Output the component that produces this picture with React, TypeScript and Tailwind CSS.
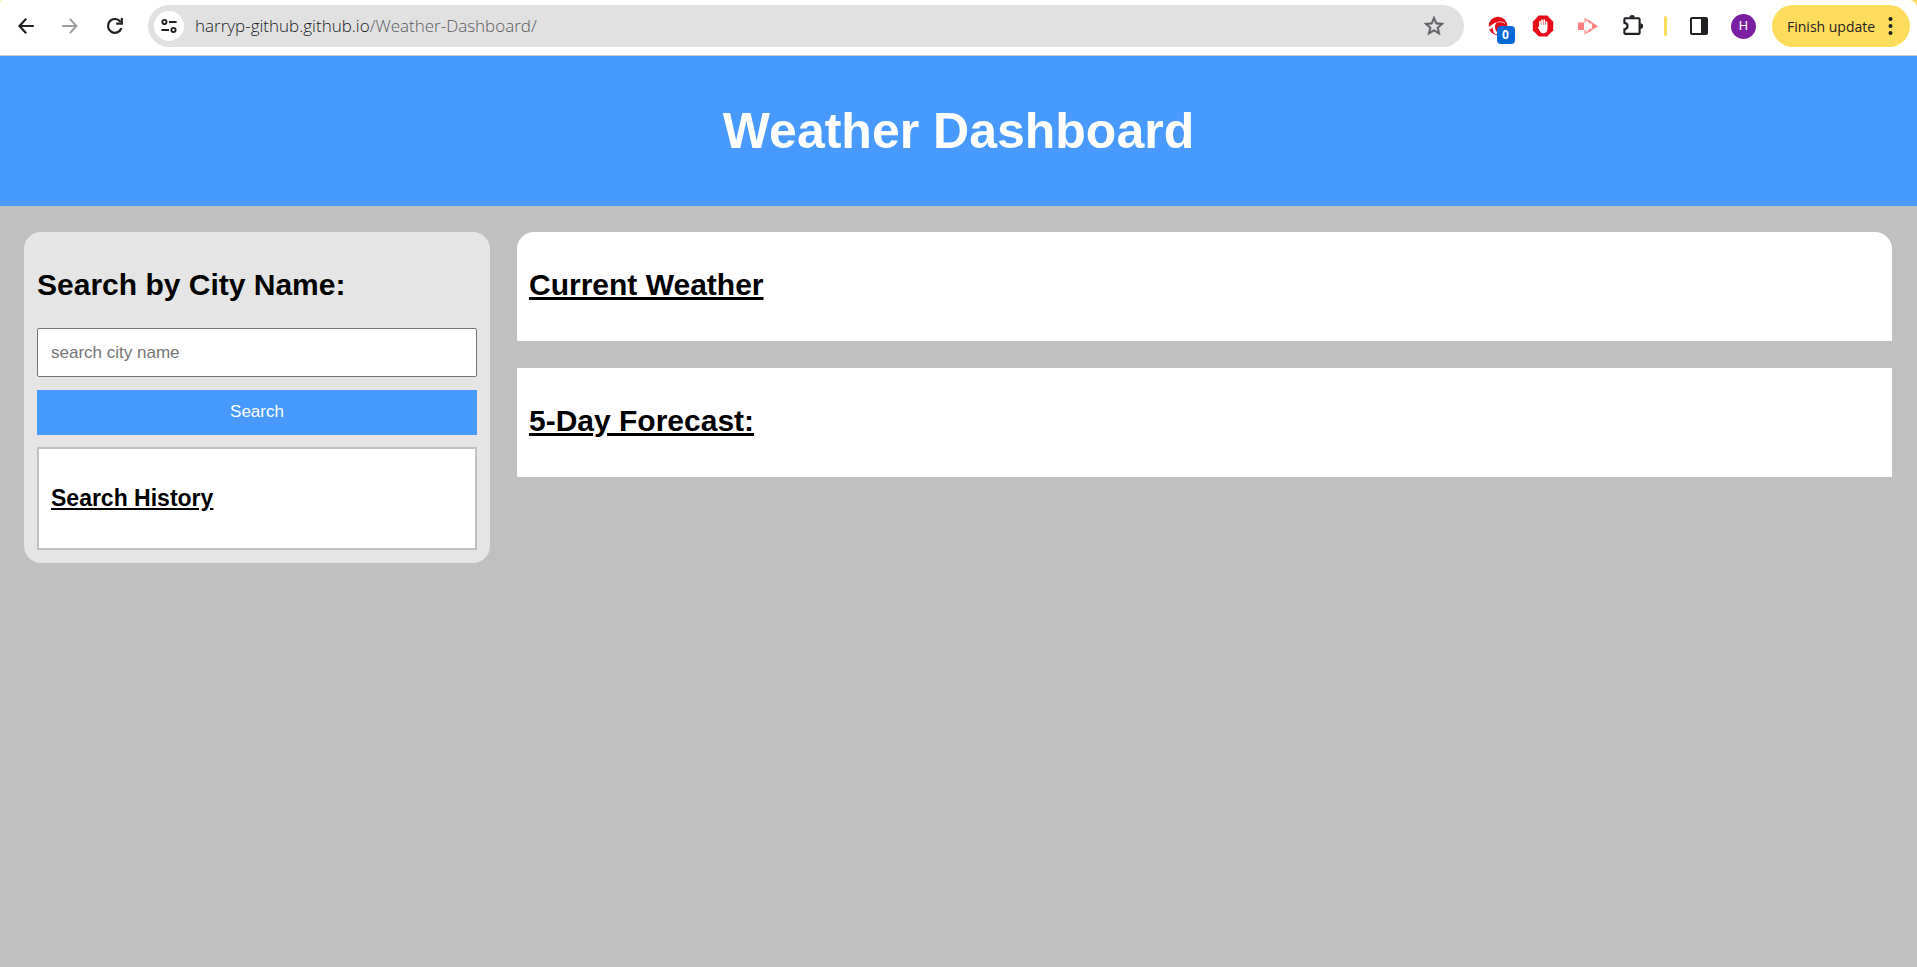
import type { ReactNode } from "react";

type ToolButtonProps = { label: string; className?: string; children: ReactNode };

function ToolButton({ label, className = "w-[45px]", children }: ToolButtonProps) {
  return (
    <button type="button" aria-label={label} className={`flex h-10 shrink-0 items-center justify-center ${className}`}>
      {children}
    </button>
  );
}

function BackIcon() {
  return (
    <svg width="22" height="22" viewBox="0 0 24 24" fill="none" stroke="#1f2024" strokeWidth="2.4">
      <path d="M20.500 12H5.500M12.200 4.200 4.900 12l7.300 7.800" />
    </svg>
  );
}

function ForwardIcon() {
  return (
    <svg width="22" height="22" viewBox="0 0 24 24" fill="none" stroke="#9d9da0" strokeWidth="2.2">
      <path d="M3.500 12h15M11.800 4.200 19.100 12l-7.300 7.800" />
    </svg>
  );
}

function ReloadIcon() {
  return (
    <svg width="20" height="20" viewBox="-1 0 20 20" fill="none" stroke="#1f2024" strokeWidth="2.2">
      <path d="M16.400 12.200A6.900 6.900 0 1 1 15.600 6" />
      <path d="M16.800 2v5.600h-5.600" />
    </svg>
  );
}

function TuneIcon() {
  return (
    <svg width="16" height="16" viewBox="0 0 16 16" fill="none" stroke="#1f2024" strokeWidth="1.9">
      <circle cx="3.400" cy="4" r="2.100" />
      <path d="M8 4h7.600M.4 12H8" />
      <circle cx="12.500" cy="12" r="2.100" />
    </svg>
  );
}

function StarIcon() {
  return (
    <svg width="24" height="24" viewBox="0 0 24 24" fill="#5f6368" stroke="#5f6368" strokeWidth="0.5">
      <path d="m22 9.240-7.190-.62L12 2 9.190 8.630 2 9.240l5.460 4.730L5.820 21 12 17.270 18.180 21l-1.630-7.030zM12 15.400l-3.760 2.270 1-4.280-3.320-2.880 4.380-.38L12 6.100l1.710 4.040 4.380.38-3.320 2.880 1 4.280z" />
    </svg>
  );
}

function TrackerIcon() {
  return (
    <svg width="20" height="20" viewBox="0 0 20 20">
      <circle cx="10" cy="10" r="9.300" fill="#e60a17" />
      <path d="M0 10.500c3 .2 5-3.500 9.500-4.500-1.700 1.500-2.500 2.600-2.500 4.500 0 2.800 1 4.800 3 7l-2.500 1C5 16.500 4.600 13.500 5 11.500c-1.700 1.500-2.800 2-4.600 1.700z" fill="#fff" />
      <path d="M9.500 6.200c3-.9 5.500-.3 7.500 1.300" stroke="#fff" strokeWidth="0.8" fill="none" />
    </svg>
  );
}

function HandIcon() {
  return (
    <svg width="22" height="22" viewBox="0 0 22 22">
      <path d="M6.800.6h8.400l6 6.200v8.400l-6 6.200H6.800l-6-6.200V6.800z" fill="#e60c17" />
      <path
        d="M8 11V6.600M10.100 10.500V5M12.300 10.500V5.200M14.500 11V7"
        stroke="#fff"
        strokeWidth="1.700"
        strokeLinecap="round"
      />
      <path d="M7.200 10h8.200v4c0 2.600-1.500 4.200-3.900 4.200-1.900 0-2.900-.8-3.600-2.300l-2.200-3.700c.5-.8 1.300-.6 1.500-.1z" fill="#fff" />
    </svg>
  );
}

function ScreencastIcon() {
  return (
    <svg width="22" height="18" viewBox="0 0 22 18">
      <path d="M1 5.500h6v7.500H1z" fill="#ff7f7f" />
      <path d="M8.200 5.500V2l11 7.200-11 7.200V13" fill="none" stroke="#ff9c9c" strokeWidth="1.500" />
      <path d="m10.500 2.500 4.500 2.600-2.600 1.600zM10.500 15.900l4.500-2.600-2.600-1.600zM15 5.600l6 3.600-6 3.600z" fill="#ff7f7f" />
    </svg>
  );
}

function PuzzleIcon() {
  return (
    <svg width="24" height="24" viewBox="0 0 24 24">
      <path
        d="M4.400 4.300h13.200a1 1 0 0 1 1 1v13.600a1 1 0 0 1-1 1H4.400a1 1 0 0 1-1-1v-3.700c4.200-.4 4.200-5.900 0-6.300V5.300a1 1 0 0 1 1-1z"
        fill="none"
        stroke="#1f2024"
        strokeWidth="2.100"
      />
      <path d="M8.400 3.600a2.700 2.700 0 0 1 5.400 0zM19.300 9.300a2.800 2.800 0 0 1 0 5.600z" fill="#1f2024" />
    </svg>
  );
}

function SidePanelIcon() {
  return (
    <svg width="20" height="20" viewBox="0 0 20 20">
      <rect x="2" y="2" width="16" height="16" rx="1" fill="none" stroke="#1f2024" strokeWidth="2" />
      <path d="M12 2h6v16h-6z" fill="#1f2024" />
    </svg>
  );
}

function BrowserBar() {
  return (
    <div className="bg-[#ffdd5c]">
      <div className="flex h-14 items-center rounded-tl-[2px] rounded-tr-[8px] border-b border-[#c9ced6] bg-white pr-[7px] pb-[3px] pl-1">
        <ToolButton label="Back" className="w-11"><BackIcon /></ToolButton>
        <ToolButton label="Forward" className="w-11"><ForwardIcon /></ToolButton>
        <ToolButton label="Reload" className="w-11"><ReloadIcon /></ToolButton>

        <div className="ml-3 flex h-[42px] min-w-0 flex-1 items-center rounded-full bg-[#e1e1e1] pr-[18px] pl-[6px]">
          <button
            type="button"
            aria-label="Site information"
            className="flex size-[30px] shrink-0 items-center justify-center rounded-full bg-white"
          >
            <TuneIcon />
          </button>
          <a href="#" className="ml-[11px] min-w-0 flex-1 truncate font-['Open_Sans',sans-serif] text-[17px] leading-6 font-[350] text-[#5a5b5f]">
            <span className="text-[#1a1b1f]">harryp-github.github.io</span>/Weather-Dashboard/
          </a>
          <button type="button" aria-label="Bookmark this page"><StarIcon /></button>
        </div>

        <div className="ml-[11px] flex shrink-0 items-center">
          <ToolButton label="Tracker blocker">
            <span className="relative flex">
              <TrackerIcon />
              <span className="absolute top-[10px] left-[9px] flex size-[18px] items-center justify-center rounded-[4px] bg-[#0468d7] font-['Open_Sans',sans-serif] text-[12px] leading-none font-bold text-white">
                0
              </span>
            </span>
          </ToolButton>
          <ToolButton label="Ad blocker"><HandIcon /></ToolButton>
          <ToolButton label="Screen recorder"><ScreencastIcon /></ToolButton>
          <ToolButton label="Extensions"><PuzzleIcon /></ToolButton>
          <span className="mx-[9px] h-5 w-[3px] rounded-full bg-[#ffdd5c]" />
          <ToolButton label="Side panel"><SidePanelIcon /></ToolButton>
          <ToolButton label="Profile">
            <span className="flex size-[25px] items-center justify-center rounded-full bg-[#7b1fa2] font-['Roboto',sans-serif] text-[13px] text-white">
              H
            </span>
          </ToolButton>
        </div>

        <button
          type="button"
          className="ml-[6px] flex h-[42px] w-[138px] shrink-0 items-center justify-between rounded-full bg-[#ffdd5c] pr-[17px] pl-[15px] font-['Open_Sans',sans-serif] text-[14px] whitespace-nowrap text-[#1f2024]"
        >
          Finish update
          <svg width="5" height="20" viewBox="0 0 5 20" fill="#1f2024">
            <circle cx="2.500" cy="3" r="2" />
            <circle cx="2.500" cy="10" r="2" />
            <circle cx="2.500" cy="17" r="2" />
          </svg>
        </button>
      </div>
    </div>
  );
}

export default function App() {
  return (
    <div className="min-h-screen bg-[#c0c0c0] font-['Liberation_Sans',Arial,sans-serif] text-black">
      <BrowserBar />
      <header className="flex h-[150px] items-center justify-center bg-[#489aff]">
        <h1 className="text-[50px] leading-[58px] font-bold text-white">Weather Dashboard</h1>
      </header>

      <main className="flex items-start gap-[27px] pt-[26px] pr-[25px] pl-6">
        <aside className="w-[466px] shrink-0 rounded-[17px] bg-[#e5e5e5] px-[13px] pt-3 pb-[13px]">
          <h2 className="pt-[23px] pb-[25px] text-[30px] leading-9 font-bold">
            <label htmlFor="city">Search by City Name:</label>
          </h2>
          <form className="flex flex-col gap-[13px]" onSubmit={(e) => e.preventDefault()}>
            <input
              id="city"
              type="text"
              placeholder="search city name"
              className="h-[49px] w-full rounded-[2px] border border-[#767676] bg-white px-[13px] text-[17px] placeholder:text-[#757575]"
            />
            <button type="submit" className="h-[45px] w-full bg-[#489aff] pb-[2px] text-[17px] text-white">
              Search
            </button>
          </form>
          <section className="mt-3 h-[103px] border-2 border-[#c0c0c0] bg-white px-3 pt-[35px]">
            <h3 className="text-[23px] leading-7 font-bold underline">Search History</h3>
          </section>
        </aside>

        <div className="flex min-w-0 flex-1 flex-col gap-[27px]">
          <section className="h-[109px] rounded-t-[17px] bg-white px-3 pt-[35px]">
            <h2 className="text-[30px] leading-9 font-bold underline">Current Weather</h2>
          </section>
          <section className="h-[109px] bg-white px-3 pt-[35px]">
            <h2 className="text-[30px] leading-9 font-bold underline">5-Day Forecast:</h2>
          </section>
        </div>
      </main>
    </div>
  );
}
